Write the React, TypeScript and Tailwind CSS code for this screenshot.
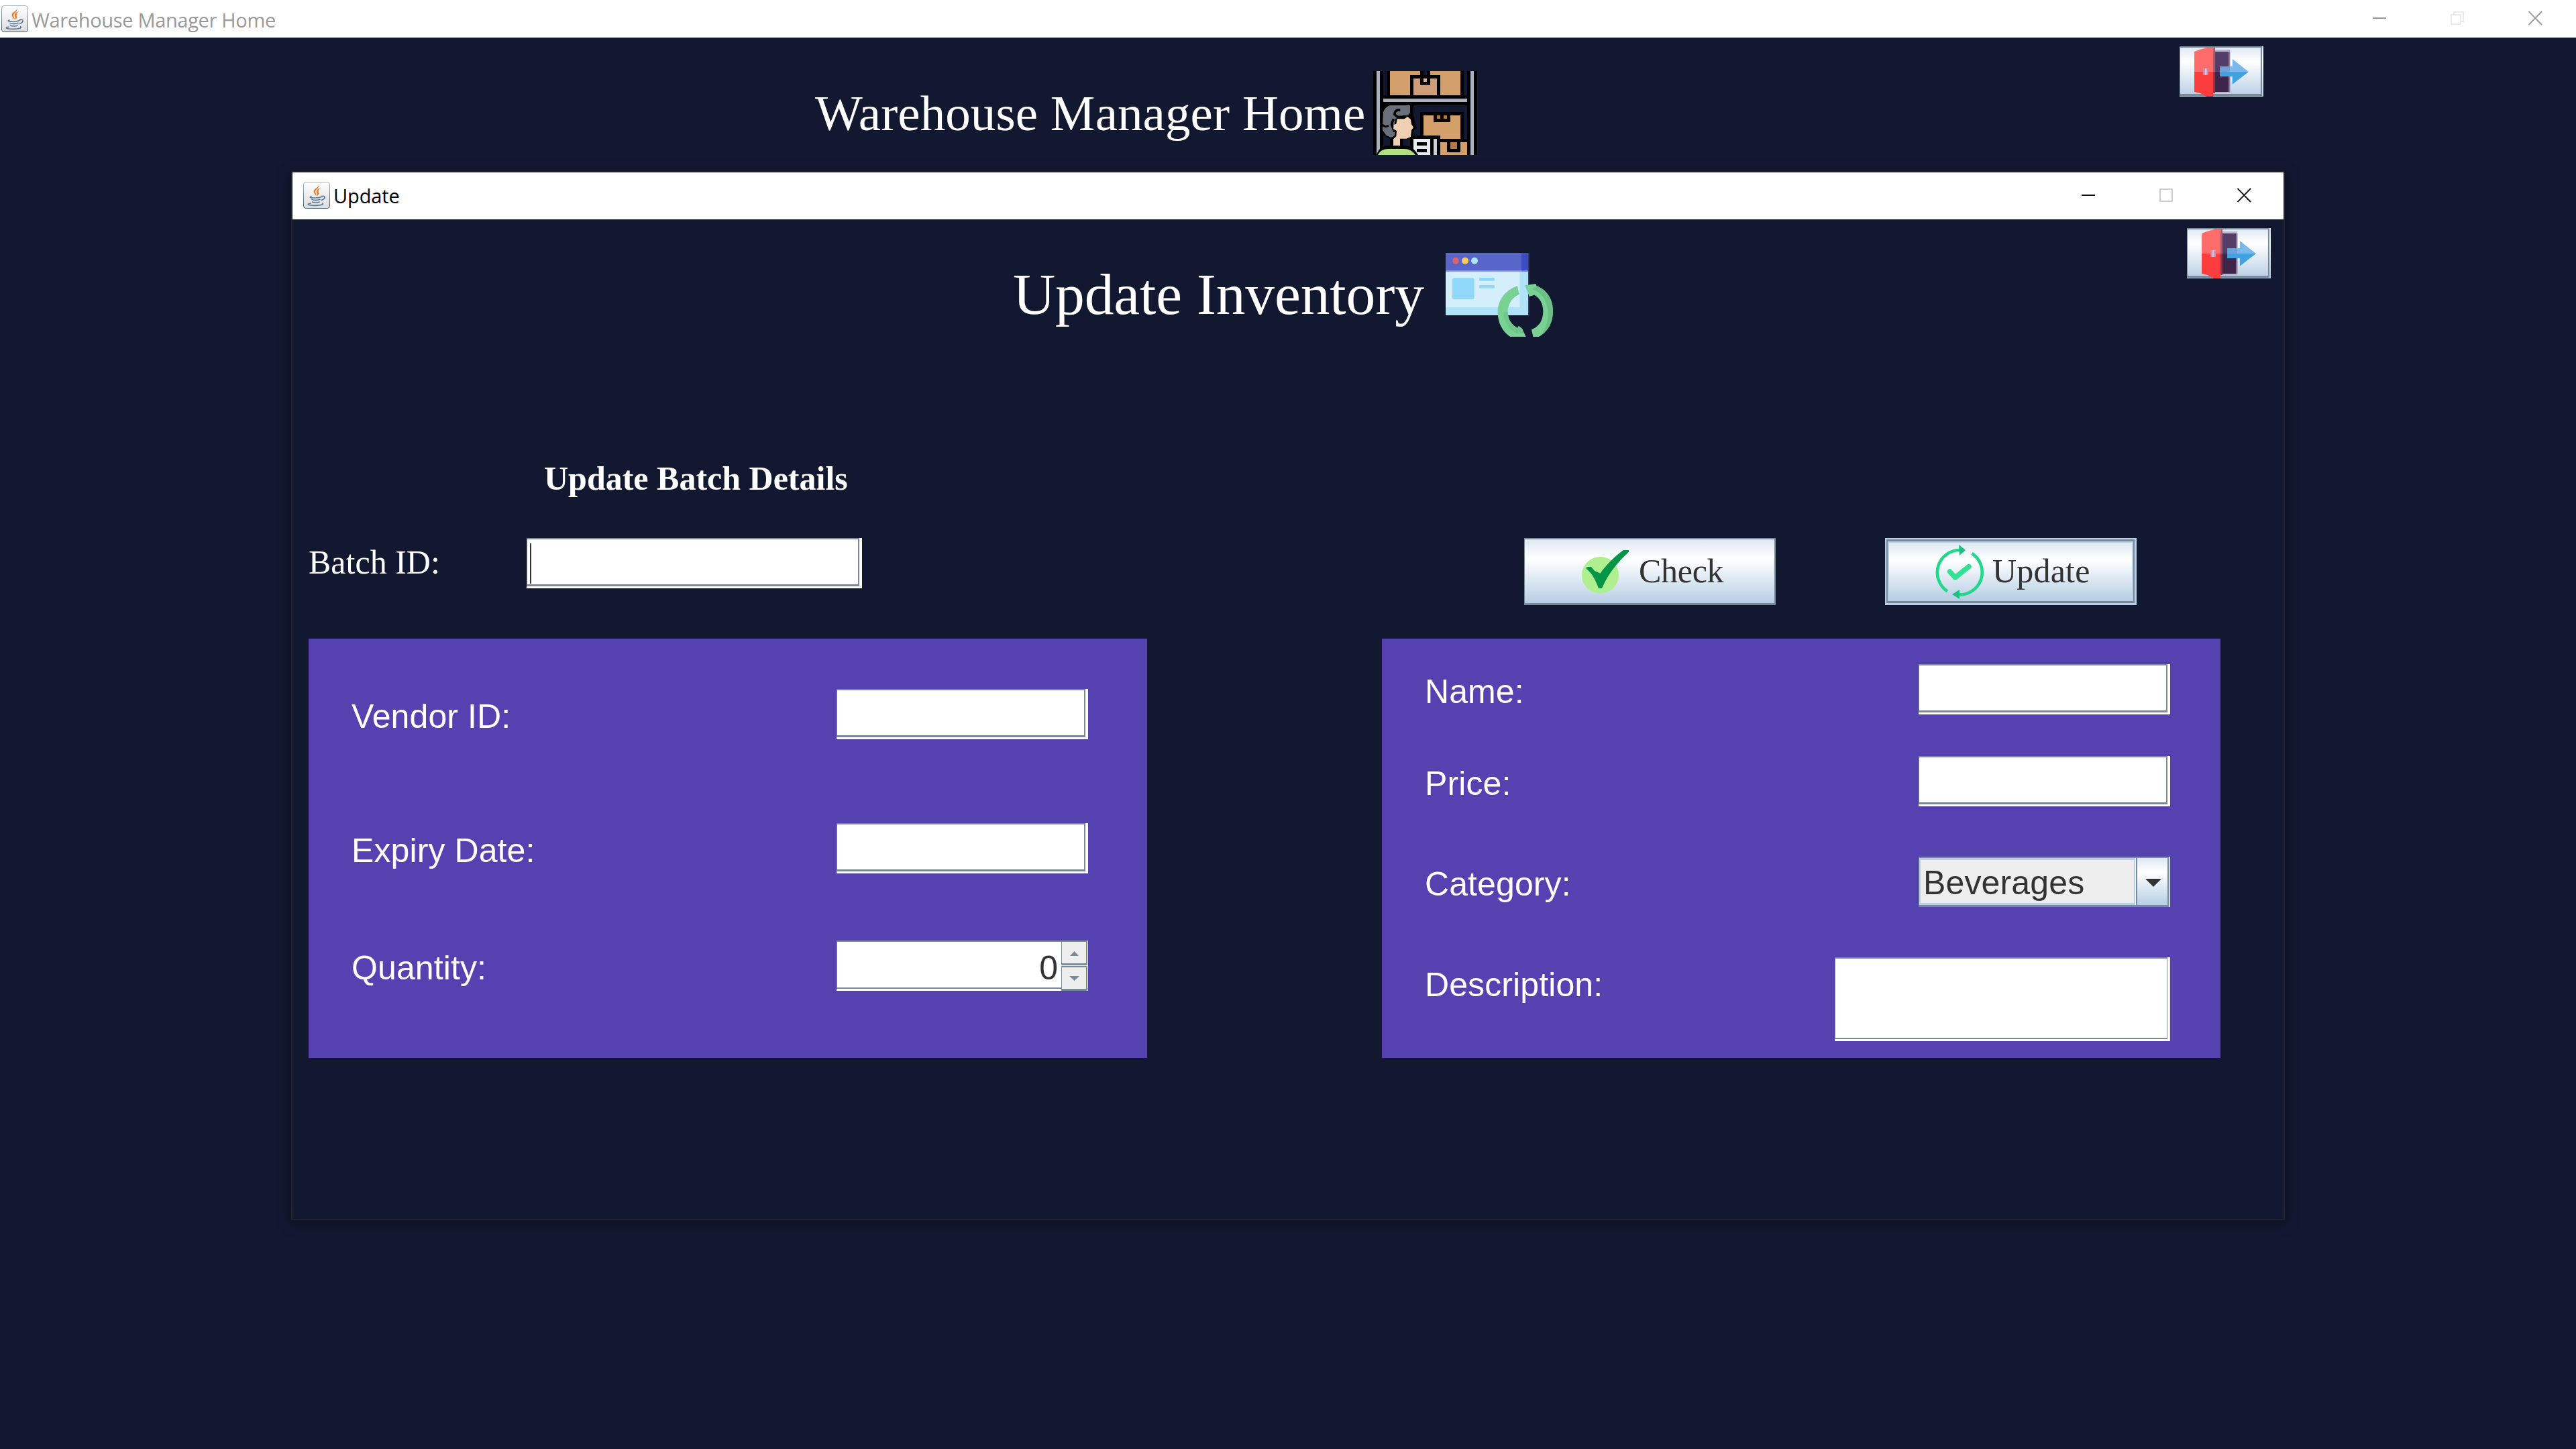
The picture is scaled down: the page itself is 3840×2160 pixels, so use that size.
import type { ReactNode } from "react";

const SERIF = "font-['Liberation_Serif',serif]";

/* Glossy steel gradient shared by buttons and the combo arrow. */
const GLOSS = "bg-[linear-gradient(to_bottom,#dde8f3_0%,#ffffff_30%,#b8cfe5_100%)]";

function JavaIcon() {
  return (
    <svg className="size-10 shrink-0" viewBox="0 0 120 120">
      <defs>
        <linearGradient id="jbg" x1="0" y1="0" x2="0" y2="1">
          <stop offset="0" stopColor="#ffffff" />
          <stop offset="1" stopColor="#dcdcdc" />
        </linearGradient>
        <linearGradient id="jbd" x1="0" y1="0" x2="0" y2="1">
          <stop offset="0" stopColor="#9db4c8" />
          <stop offset="1" stopColor="#35536b" />
        </linearGradient>
      </defs>
      <rect x="1.5" y="1.5" width="117" height="117" rx="11" fill="url(#jbg)" stroke="url(#jbd)" strokeWidth="3" />
      <path d="M70 11C74 24 44 30 47 45C48 53 56 58 58 64C61 54 52 50 54 43C57 33 74 27 70 11Z" fill="#e8792b" />
      <path d="M79 28C66 30 58 38 60 47C61 52 65 56 61 65C73 57 69 51 68 46C66 38 70 33 79 28Z" fill="#e8792b" />
      <g fill="none" stroke="#55799b" strokeWidth="5" strokeLinecap="round">
        <path d="M36 66C25 69 32 72 50 72C62 72 72 71 80 68" />
        <path d="M82 65C102 60 100 76 82 82" />
        <path d="M39 79C45 83 66 83 75 79" />
        <path d="M41 90C48 94 64 94 72 90" />
        <path d="M33 96C10 101 26 106 54 106C78 106 94 101 86 96" />
      </g>
    </svg>
  );
}

function ExitButton({ className }: { className: string }) {
  return (
    <button className={`block h-[75px] w-[125px] shrink-0 ${className}`}>
      <svg className="block h-[75px] w-[125px]" viewBox="120 207 306 225" preserveAspectRatio="none">
        <defs>
          <linearGradient id="gloss" x1="0" y1="0" x2="0" y2="1">
            <stop offset="0" stopColor="#dde8f3" />
            <stop offset="0.3" stopColor="#ffffff" />
            <stop offset="1" stopColor="#b8cfe5" />
          </linearGradient>
        </defs>
        <rect x="120" y="207" width="306" height="225" fill="url(#gloss)" />
        <path d="M120 207H421V429H120Z M122.5 213V420H416V213Z" fill="#7a8a99" fillRule="evenodd" />
        <rect x="243" y="222" width="61" height="195" fill="#b9b7cf" />
        <rect x="243" y="231" width="61" height="90" fill="#533d69" />
        <rect x="243" y="321" width="61" height="90" fill="#3e2449" />
        <rect x="299" y="231" width="5" height="180" fill="#8f7d9d" />
        <path d="M174 231L194 221L222 213H243V321H174Z" fill="#ff6c6c" />
        <path d="M174 321H243V432H218L196 417L174 411Z" fill="#fc3d3e" />
        <rect x="243" y="213" width="7" height="108" fill="#a35a73" />
        <rect x="243" y="321" width="7" height="96" fill="#8f3148" />
        <rect x="206" y="306" width="19" height="30" fill="#d48da6" />
        <rect x="213" y="306" width="6" height="30" fill="#c9c4e8" />
        <path d="M267 297H304V321H267Z" fill="#6fa3da" />
        <path d="M304 297H313V264L372 321H304Z" fill="#79b9ec" />
        <path d="M267 321H372L313 377V342H267Z" fill="#42a1df" />
      </svg>
    </button>
  );
}

function WarehouseIcon() {
  return (
    <svg className="mt-[50px] h-[125px] w-[155px] shrink-0" viewBox="51 48 465 375" preserveAspectRatio="none">
      <rect x="51" y="48" width="45" height="375" fill="#000" />
      <rect x="66" y="48" width="15" height="375" fill="#a9b1bc" />
      <rect x="471" y="48" width="45" height="375" fill="#000" />
      <rect x="111" y="48" width="345" height="110" fill="#000" />
      <rect x="126" y="48" width="315" height="108" fill="#d3a06b" />
      <rect x="216" y="66" width="135" height="92" fill="#000" />
      <rect x="261" y="48" width="45" height="62" fill="#000" />
      <rect x="276" y="48" width="15" height="18" fill="#121830" />
      <path d="M231 81H261V110H306V81H336V156H231Z" fill="#d09d77" />
      <rect x="276" y="81" width="15" height="15" fill="#e0ae84" />
      <rect x="81" y="156" width="405" height="45" fill="#000" />
      <rect x="96" y="171" width="375" height="15" fill="#a9b1bc" />
      <rect x="486" y="48" width="15" height="375" fill="#a9b1bc" />
      {/* crates on the lower shelf */}
      <rect x="261" y="231" width="195" height="125" fill="#000" />
      <rect x="276" y="246" width="165" height="110" fill="#d3a06b" />
      <rect x="321" y="246" width="75" height="30" fill="#000" />
      <rect x="336" y="246" width="15" height="15" fill="#b27a48" />
      <rect x="366" y="246" width="15" height="15" fill="#b27a48" />
      <path d="M216 336H351V351H471V366H351V423H216Z" fill="#000" />
      <rect x="351" y="366" width="120" height="57" fill="#d3a06b" />
      <rect x="381" y="366" width="60" height="45" fill="#000" />
      <rect x="396" y="366" width="30" height="30" fill="#b27a48" />
      <rect x="231" y="351" width="75" height="72" fill="#e9ecf3" />
      <rect x="246" y="366" width="45" height="15" fill="#000" />
      <rect x="246" y="396" width="45" height="15" fill="#000" />
      <rect x="321" y="351" width="15" height="72" fill="#cccfdb" />
      {/* worker */}
      <path d="M96 201H231V246L240 285L245 303L233 312L228 336L208 352H186V390H126V352L98 336L82 310V270L88 230Z" fill="#000" />
      <path d="M126 201H216V234L205 246H186L150 262L146 290L148 335L132 345L110 336L93 312V290L96 232Q104 208 126 201Z" fill="#68707b" />
      <path d="M172 222H160Q147 226 147 242L160 253H212M143 262Q134 275 134 288L146 320" fill="none" stroke="#000" strokeWidth="11" />
      <path d="M92 288Q104 302 120 292" fill="none" stroke="#000" strokeWidth="9" />
      <path d="M158 262H190L205 252L219 264L222 285L231 300L222 312L219 342L200 350H171V381H141V352L154 340L156 315L141 306L143 288L154 284Z" fill="#f0cfb2" />
      <path d="M66 423Q80 381 118 381H196Q232 385 252 423Z" fill="#000" />
      <path d="M72 423Q84 396 118 396H190Q222 396 240 423Z" fill="#b2df7f" />
    </svg>
  );
}

function BrowserRefreshIcon() {
  return (
    <svg className="mt-[50px] h-[125px] w-[160px] shrink-0" viewBox="75 81 480 375" preserveAspectRatio="none">
      <rect x="75" y="81" width="369" height="279" fill="#afe4f8" />
      <rect x="75" y="81" width="331" height="243" fill="#d4effb" />
      <rect x="75" y="81" width="369" height="84" fill="#8b98de" />
      <rect x="75" y="81" width="369" height="78" fill="#5866c9" />
      <rect x="414" y="81" width="30" height="78" fill="#3e4cc4" />
      <rect x="414" y="159" width="30" height="6" fill="#7088e0" />
      <rect x="444" y="81" width="5" height="279" fill="#353b5e" />
      <ellipse cx="120" cy="116" rx="14" ry="15" fill="#db6470" />
      <ellipse cx="162" cy="116" rx="15" ry="15" fill="#fcca5f" />
      <ellipse cx="204" cy="116" rx="15" ry="15" fill="#aee2f7" />
      <rect x="105" y="193" width="98" height="96" rx="9" fill="#90d8f9" />
      <rect x="225" y="192" width="69" height="14" rx="4" fill="#90d8f9" />
      <rect x="225" y="225" width="69" height="14" rx="4" fill="#90d8f9" />
      <path d="M396 229C345 245 308 290 308 346C308 395 330 435 364 456H434L417 420L402 408L396 417C370 402 353 380 353 346C353 310 372 280 404 266Z" fill="#79d293" />
      <path d="M353 346C353 380 370 402 396 417L402 408L417 420L425 440H395C355 425 335 390 334 346Z" fill="#70c78b" />
      <path d="M430 226L478 219L482 229C530 248 555 290 555 342C555 390 530 435 492 456H466L459 424C492 410 511 385 511 342C511 308 497 284 472 269L449 276Z" fill="#79d293" />
      <path d="M482 229C530 248 555 290 555 342C555 390 535 430 500 450C522 425 535 385 532 342C530 295 505 258 462 243Z" fill="#6cc087" />
    </svg>
  );
}

function CheckIcon() {
  return (
    <svg className="mt-[16px] ml-[85px] h-[65px] w-[70px] shrink-0" viewBox="173 120 112 195" preserveAspectRatio="none">
      <ellipse cx="217" cy="232" rx="44" ry="82" fill="#b0ef8f" />
      <path d="M184 196L195 194L204 214L217 224C230 190 250 150 272 120H285V128C258 175 236 225 221 291L213 291C206 255 198 225 184 204Z" fill="#069447" />
    </svg>
  );
}

function UpdateIcon() {
  return (
    <svg className="mt-[3px] ml-[68px] h-[81px] w-[74px] shrink-0" viewBox="0 0 74 81">
      <g fill="none" stroke="#22d789" strokeWidth="4.6">
        <path d="M19 69.500A33.500 33.500 0 0 1 38 8" />
        <path d="M55.500 13A33.500 33.500 0 0 1 35 74.500" />
      </g>
      <path d="M36 0L46 8L37 16Z" fill="#1cbf80" />
      <path d="M37 67L26 74L37 81Z" fill="#1cbf80" />
      <path d="M22.500 40L30.500 49L51 32.500" fill="none" stroke="#33e193" strokeWidth="7.500" strokeLinecap="round" strokeLinejoin="round" />
    </svg>
  );
}

function Field({ className = "w-[375px]", children }: { className?: string; children?: ReactNode }) {
  return (
    <div className={`h-[75px] shrink-0 border-r-4 border-b-[3px] border-white bg-white ${className}`}>
      <div className="h-full border-t-2 border-r-2 border-b-[3px] border-l border-[#7a8a99] bg-white">{children}</div>
    </div>
  );
}

function Row({ label, children }: { label: string; children: ReactNode }) {
  return (
    <div className="flex h-[75px] items-start justify-between">
      <label className="mt-[11px] text-[50px] leading-[60px] tracking-[0.1px] text-white">{label}</label>
      {children}
    </div>
  );
}

function Spinner() {
  return (
    <div className="flex h-[75px] w-[375px] bg-white">
      <div className="flex w-[335px] flex-col border-b-[3px] border-white">
        <div className="flex h-full justify-end border-t-2 border-b-2 border-l border-[#7a8a99] pr-[5px]">
          <span className="mt-[9px] text-[50px] leading-[60px] text-[#333333]">0</span>
        </div>
      </div>
      <div className="flex w-[39px] flex-col justify-between">
        <div className="flex h-[37px] items-center justify-center border-t-2 border-r-2 border-b-[3px] border-l border-[#7a8a99] bg-[#eeeeee]">
          <svg className="mt-[3px] h-[7px] w-[13px]" viewBox="0 0 13 7"><path d="M0 7L6.500 0L13 7Z" fill="#7a8a99" /></svg>
        </div>
        <div className="flex h-[37px] items-center justify-center border-t-2 border-r-2 border-b-[3px] border-l border-[#7a8a99] bg-[#eeeeee]">
          <svg className="mt-px h-[7px] w-[15px]" viewBox="0 0 15 7"><path d="M0 0L7.500 7L15 0Z" fill="#7a8a99" /></svg>
        </div>
      </div>
    </div>
  );
}

function Combo() {
  return (
    <div className="h-[75px] w-[375px] border-r-2 border-[#c9dbeb]">
      <div className="flex h-full border-t-2 border-r-2 border-b-[3px] border-l border-[#7a8a99] bg-white">
        <div className="w-[322px] border-x-2 border-y-[3px] border-[#b8cfe5] bg-[#eeeeee] pl-[4px]">
          <span className="mt-[4px] block text-[50px] leading-[60px] tracking-[0.15px] text-[#333333]">Beverages</span>
        </div>
        <div className={`ml-px flex flex-1 justify-center border-l-2 border-[#7a8a99] ${GLOSS}`}>
          <svg className="mt-[31px] ml-[2px] h-3 w-6" viewBox="0 0 24 12"><path d="M0 0H24L12 12Z" fill="#333333" /></svg>
        </div>
      </div>
    </div>
  );
}

function TitleGlyphs({ color, boxColor, restore }: { color: string; boxColor: string; restore?: boolean }) {
  return (
    <div className="flex items-center gap-[95px]">
      <svg className="h-[22px] w-[21px]" viewBox="0 0 21 22"><path d="M0 11H20" stroke={color} strokeWidth="2" /></svg>
      <svg className="h-[22px] w-[21px]" viewBox="0 0 21 22" fill="none" stroke={boxColor} strokeWidth="2">
        {restore ? <path d="M1 6H15V20H1ZM5 6V2H19V16H15" /> : <path d="M1 2H19V20H1Z" />}
      </svg>
      <svg className="h-[22px] w-[21px]" viewBox="0 0 21 22"><path d="M0.500 1L20 21M20 1L0.500 21" stroke={color} strokeWidth="1.800" /></svg>
    </div>
  );
}

function UpdateDialog() {
  return (
    <div className="absolute top-[255px] left-[434px] w-[2972px] border-2 border-[#20232c] bg-[#121830] shadow-[0_4px_20px_rgba(0,0,0,0.35)]">
      <div className="flex h-[70px] items-start justify-between bg-white pr-[48px] pl-4">
        <div className="flex pt-[14px]">
          <JavaIcon />
          <span className="mt-px ml-[5px] text-[29px] leading-[40px] tracking-[-0.1px] whitespace-nowrap text-black font-['Open_Sans',sans-serif]">Update</span>
        </div>
        <div className="pt-[23px]">
          <TitleGlyphs color="#111111" boxColor="#cccccc" />
        </div>
      </div>
      <div className="h-[1490px]">
        <div className="flex h-[356px] items-start">
          <h2 className={`mt-[62px] ml-[1074px] w-[645px] text-[87.5px] leading-[100px] tracking-[-0.12px] whitespace-nowrap text-white ${SERIF}`}>Update Inventory</h2>
          <BrowserRefreshIcon />
          <ExitButton className="mt-[13px] ml-[945px]" />
        </div>
        <h3 className={`ml-[375px] text-[50px] leading-[60px] font-bold text-white ${SERIF}`}>Update Batch Details</h3>
        <div className="mt-[59px] flex h-[100px] items-start pl-6">
          <label className={`mt-[6px] w-[325px] text-[50px] leading-[60px] text-white ${SERIF}`}>Batch ID:</label>
          <Field className="w-[500px]">
            <div className="mt-[6px] ml-[4px] h-[60px] w-[2px] bg-[#333333]" />
          </Field>
          <button className={`ml-[987px] flex h-[100px] w-[375px] items-start border-t-2 border-r-2 border-b-[3px] border-l border-[#7a8a99] ${GLOSS}`}>
            <CheckIcon />
            <span className={`mt-[17px] ml-[15px] text-[50px] leading-[60px] tracking-[-0.3px] text-[#333333] ${SERIF}`}>Check</span>
          </button>
          <button className="ml-[163px] h-[100px] w-[375px] border-t-2 border-r-[3px] border-b-[3px] border-l-2 border-[#b8cfe5]">
            <span className="block h-full border-x-2 border-y-[3px] border-[#7a8a99]">
              <span className={`flex h-full items-start border-2 border-[#b8cfe5] ${GLOSS}`}>
                <UpdateIcon />
                <span className={`mt-[12px] ml-[12px] text-[50px] leading-[60px] tracking-[0.2px] text-[#333333] ${SERIF}`}>Update</span>
              </span>
            </span>
          </button>
        </div>
        <div className="mt-[50px] flex gap-[350px] pl-6">
          <section className="flex h-[625px] w-[1250px] flex-col bg-[#5641b0] pt-[75px] pr-[88px] pl-[64px]">
            <Row label="Vendor ID:"><Field /></Row>
            <div className="mt-[125px]"><Row label="Expiry Date:"><Field /></Row></div>
            <div className="mt-[100px]"><Row label="Quantity:"><Spinner /></Row></div>
          </section>
          <section className="flex h-[625px] w-[1250px] flex-col bg-[#5641b0] pt-[38px] pr-[75px] pl-[64px]">
            <Row label="Name:"><Field /></Row>
            <div className="mt-[62px]"><Row label="Price:"><Field /></Row></div>
            <div className="mt-[75px]"><Row label="Category:"><Combo /></Row></div>
            <div className="mt-[75px]">
              <Row label="Description:">
                <div className="h-[125px] w-[500px] border-r-2 border-[#eeeeee]">
                  <div className="h-full border-r-2 border-b-[3px] border-white bg-white">
                    <div className="h-full border-t-2 border-r border-b-2 border-l border-[#7a8a99]" />
                  </div>
                </div>
              </Row>
            </div>
          </section>
        </div>
      </div>
    </div>
  );
}

export default function App() {
  return (
    <div className="relative h-[2160px] w-[3840px] overflow-hidden bg-[#121830] font-['Liberation_Sans',sans-serif]">
      <div className="flex h-14 items-start justify-between bg-white pr-[50px] pl-[2px]">
        <div className="flex pt-2">
          <JavaIcon />
          <span className="mt-[2px] ml-[5px] text-[29px] leading-[40px] tracking-[-0.33px] whitespace-nowrap text-[#999999] font-['Open_Sans',sans-serif]">Warehouse Manager Home</span>
        </div>
        <div className="pt-[16px]">
          <TitleGlyphs color="#999999" boxColor="#ebebeb" restore />
        </div>
      </div>
      <div className="flex items-start">
        <h1 className={`mt-[68px] ml-[1215px] w-[832px] text-[75px] leading-[90px] tracking-[0.08px] whitespace-nowrap text-white ${SERIF}`}>Warehouse Manager Home</h1>
        <WarehouseIcon />
        <ExitButton className="mt-[13px] ml-[1047px]" />
      </div>
      <UpdateDialog />
    </div>
  );
}
